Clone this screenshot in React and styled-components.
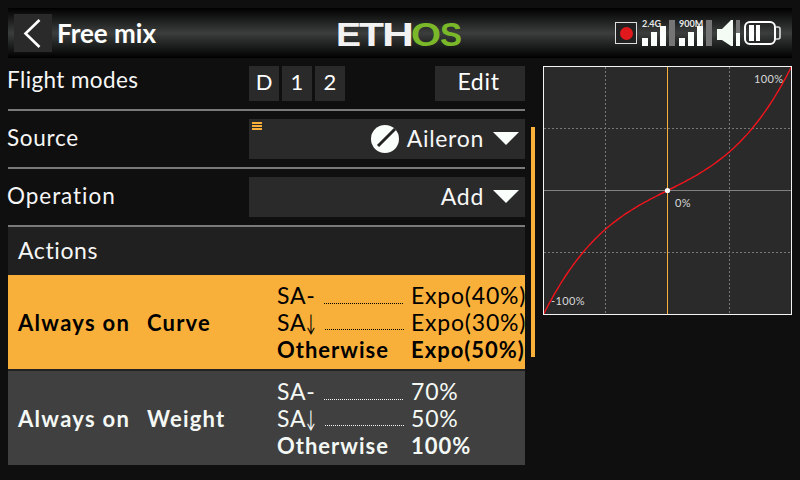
import styled, {createGlobalStyle} from 'styled-components'

const GlobalStyle = createGlobalStyle`
  html, body { margin: 0; padding: 0; background: #0f0f0f; }
  body { width: 800px; height: 480px; overflow: hidden; font-family: Lato, "Liberation Sans", sans-serif; color: #fff; }
`

const ORANGE = '#f9b03a'

const LOGO_LETTERS = [
  ['E', 1, 25, '#f2f2f2'],
  ['T', 24, 25, '#f2f2f2'],
  ['H', 47, 32, '#f2f2f2'],
  ['O', 76, 30, '#7ab82a'],
  ['S', 105, 22, '#7ab82a'],
]

const curvePoints = () => {
  const pts = []
  for (let i = -124; i <= 124; i += 2) {
    const x = i / 124
    const y = 0.5 * x * x * x + 0.5 * x
    pts.push(`${(123.5 + i).toFixed(1)},${(123.5 - y * 124).toFixed(1)}`)
  }
  return pts.join(' ')
}

const Signal = ({label}) => (
  <SignalIcon width="33" height="26" viewBox="0 0 33 26">
    <rect x="0" y="18" width="6" height="8" fill="#fbfffb"/>
    <rect x="9" y="12" width="6" height="14" fill="#fbfffb"/>
    <rect x="18" y="6" width="6" height="20" fill="#fbfffb"/>
    <rect x="27" y="0" width="6" height="26" fill="#757575"/>
    <text x="0" y="7" fontSize="9" fontWeight="700" fill="#e8e8e8" fontFamily="Lato, sans-serif">{label}</text>
  </SignalIcon>
)

const Rows = ({up, down, last}) => (
  <Details>
    <DetailLine>
      <DetailName>SA-</DetailName>
      <Dots $left={47}/>
      <DetailValue>{up}</DetailValue>
    </DetailLine>
    <DetailLine>
      <DetailName>SA<Arrow>↓</Arrow></DetailName>
      <Dots $left={48}/>
      <DetailValue>{down}</DetailValue>
    </DetailLine>
    <DetailLine $bold>
      <DetailName>Otherwise</DetailName>
      <DetailValue>{last}</DetailValue>
    </DetailLine>
  </Details>
)

export default function App() {
  return (
    <Page>
      <GlobalStyle/>
      <Header>
        <HeaderLeft>
          <BackButton>
            <svg width="38" height="38" viewBox="0 0 38 38">
              <path d="M25.5 6 L11.5 19.5 L25.5 33" fill="none" stroke="#fff" strokeWidth="2.6"/>
            </svg>
          </BackButton>
          <Title>Free mix</Title>
        </HeaderLeft>
        <Logo width="130" height="34" viewBox="0 0 130 34">
          {LOGO_LETTERS.map(([letter, x, width, color]) => (
            <text key={letter} x={x} y="30" fontFamily="Liberation Sans, sans-serif" fontWeight="700" fontSize="33" fill={color} textLength={width} lengthAdjust="spacingAndGlyphs">{letter}</text>
          ))}
        </Logo>
        <Status>
          <RecordBox><RecordDot/></RecordBox>
          <Signal label="2.4G"/>
          <Signal label="900M"/>
          <Speaker width="23" height="26" viewBox="0 0 23 26">
            <path d="M0 9 H5 L14 0 H16 V26 H14 L5 20 H0 Z" fill="#f4fbf4"/>
            <rect x="19" y="0" width="4" height="13" fill="#757575"/>
            <rect x="19" y="13" width="4" height="13" fill="#fbfffb"/>
          </Speaker>
          <svg width="37" height="24" viewBox="0 0 37 24">
            <rect x="1" y="1" width="30" height="22" rx="5" fill="none" stroke="#fff" strokeWidth="2"/>
            <path d="M32 6 H34 Q36 6 36 8 V16 Q36 18 34 18 H32" fill="none" stroke="#ddd" strokeWidth="1.6"/>
            <rect x="5" y="4" width="5" height="16" fill="#fff"/>
            <rect x="12" y="4" width="4" height="16" fill="#fff"/>
          </svg>
        </Status>
      </Header>
      <Main>
        <LeftColumn>
          <Row $height={51}>
            <Label $lift={8} $spacing={0.4}>Flight modes</Label>
            <Modes>
              <ModeButton>D</ModeButton>
              <ModeButton>1</ModeButton>
              <ModeButton>2</ModeButton>
            </Modes>
            <EditButton>Edit</EditButton>
          </Row>
          <Row>
            <Label>Source</Label>
            <Field>
              <Marker/>
              <svg width="28" height="28" viewBox="0 0 28 28">
                <circle cx="14" cy="14" r="14" fill="#fbfffb"/>
                <line x1="7" y1="21" x2="24" y2="4" stroke="#222" strokeWidth="3"/>
              </svg>
              <FieldText>Aileron</FieldText>
              <Caret/>
            </Field>
          </Row>
          <Row>
            <Label $spacing={0.95}>Operation</Label>
            <Field>
              <FieldText>Add</FieldText>
              <Caret/>
            </Field>
          </Row>
          <ActionsHead>Actions</ActionsHead>
          <ActionRow $active>
            <ActionName>Always on</ActionName>
            <ActionKind>Curve</ActionKind>
            <Rows up="Expo(40%)" down="Expo(30%)" last="Expo(50%)"/>
          </ActionRow>
          <ActionRow>
            <ActionName>Always on</ActionName>
            <ActionKind>Weight</ActionKind>
            <Rows up="70%" down="50%" last="100%"/>
          </ActionRow>
        </LeftColumn>
        <ScrollBar/>
        <Graph>
          <svg width="247" height="247" viewBox="0 0 247 247">
            <g stroke="#777" strokeWidth="1" strokeDasharray="2 2">
              <line x1="61.5" y1="0" x2="61.5" y2="247"/>
              <line x1="185.5" y1="0" x2="185.5" y2="247"/>
              <line x1="0" y1="61.5" x2="247" y2="61.5"/>
              <line x1="0" y1="185.5" x2="247" y2="185.5"/>
            </g>
            <line x1="0" y1="123.5" x2="247" y2="123.5" stroke="#808080"/>
            <line x1="123.5" y1="0" x2="123.5" y2="247" stroke={ORANGE}/>
            <polyline points={curvePoints()} fill="none" stroke="#f0141c" strokeWidth="1.4"/>
            <circle cx="123.5" cy="123.5" r="2.6" fill="#fff"/>
            <g fontFamily="Lato, sans-serif" fontSize="11" fill="#d8d8d8" letterSpacing="0.4">
              <text x="210" y="16">100%</text>
              <text x="131" y="140">0%</text>
              <text x="7" y="238">-100%</text>
            </g>
          </svg>
        </Graph>
      </Main>
    </Page>
  )
}

const Page = styled.div`
  width: 800px;
  height: 480px;
  padding: 8px;
  box-sizing: border-box;
`

const Header = styled.header`
  height: 50px;
  display: grid;
  grid-template-columns: 1fr auto 1fr;
  align-items: center;
  background: linear-gradient(#000 0%, #1a1c1b 22%, #3b3e3d 50%, #1a1c1b 78%, #000 100%);
`

const HeaderLeft = styled.div`
  display: flex;
  align-items: center;
  padding-left: 6px;
`

const BackButton = styled.div`
  width: 38px;
  height: 38px;
  display: flex;
  background: #2a2a2a;
`

const Title = styled.div`
  margin-left: 5px;
  font-size: 26px;
  font-weight: 700;
  color: #fff;
`

const Logo = styled.svg`
  overflow: visible;
`

const Status = styled.div`
  display: flex;
  align-items: center;
  justify-content: flex-end;
  gap: 4px;
  padding-right: 11px;
`

const SignalIcon = styled.svg`
  overflow: visible;
`

const Speaker = styled.svg`
  margin-left: 1px;
`

const RecordBox = styled.div`
  width: 22px;
  height: 22px;
  box-sizing: border-box;
  border: 1px solid #ddd;
  display: flex;
  align-items: center;
  justify-content: center;
  background: #222;
  margin-right: 1px;
`

const RecordDot = styled.div`
  width: 13px;
  height: 13px;
  border-radius: 50%;
  background: #e2191c;
`

const Main = styled.main`
  display: flex;
  align-items: flex-start;
`

const LeftColumn = styled.div`
  width: 517px;
  flex: none;
`

const Row = styled.div`
  height: ${p => p.$height || 56}px;
  border-bottom: 2px solid #7a7a7a;
  display: flex;
  align-items: center;
`

const Label = styled.div`
  width: 241px;
  flex: none;
  font-size: 22.5px;
  letter-spacing: ${p => p.$spacing || 0.7}px;
  color: #f6f6f6;
  margin-left: -1px;
  margin-right: 1px;
  padding-bottom: ${p => p.$lift || 4}px;
`

const Modes = styled.div`
  display: flex;
  gap: 3px;
  flex: 1;
`

const ModeButton = styled.div`
  width: 30px;
  height: 35px;
  background: #2a2a2a;
  font-size: 22px;
  line-height: 31px;
  text-align: center;
`

const EditButton = styled.div`
  width: 90px;
  height: 35px;
  background: #2a2a2a;
  font-size: 23px;
  line-height: 31px;
  text-align: center;
  letter-spacing: 0.7px;
  padding-right: 3px;
  box-sizing: border-box;
`

const Field = styled.div`
  position: relative;
  flex: 1;
  height: 40px;
  background: #2a2a2a;
  display: flex;
  align-items: center;
  justify-content: flex-end;
  gap: 8px;
  padding-right: 6px;
`

const Marker = styled.div`
  position: absolute;
  top: 3px;
  left: 3px;
  width: 10px;
  height: 8px;
  background: repeating-linear-gradient(${ORANGE} 0 2px, transparent 2px 3px);
`

const FieldText = styled.span`
  font-size: 23px;
  letter-spacing: 0.7px;
  color: #f6f6f6;
  padding-bottom: 3px;
`

const Caret = styled.div`
  width: 0;
  height: 0;
  margin-left: 1px;
  margin-bottom: 1px;
  border-left: 13px solid transparent;
  border-right: 13px solid transparent;
  border-top: 13px solid #fbfffb;
`

const ActionsHead = styled.div`
  height: 48px;
  line-height: 46px;
  padding-left: 10px;
  background: #202020;
  font-size: 23px;
  letter-spacing: 0.6px;
  color: #f6f6f6;
`

const ActionRow = styled.div`
  height: 94px;
  display: flex;
  align-items: center;
  padding-left: 10px;
  background: ${p => (p.$active ? ORANGE : '#404040')};
  color: ${p => (p.$active ? '#000' : '#f4f8f4')};
  & + & {
    margin-top: 2px;
    box-shadow: 0 -2px 0 #222;
  }
`

const ActionName = styled.div`
  width: 129px;
  flex: none;
  font-size: 22px;
  font-weight: 700;
  letter-spacing: 1.3px;
`

const ActionKind = styled.div`
  width: 130px;
  flex: none;
  font-size: 22px;
  font-weight: 700;
  letter-spacing: 1.2px;
`

const Details = styled.div`
  flex: 1;
  min-width: 0;
  padding-top: 2px;
`

const DetailLine = styled.div`
  height: 26.5px;
  line-height: 26.5px;
  display: flex;
  position: relative;
  white-space: nowrap;
  font-size: ${p => (p.$bold ? 22 : 23)}px;
  font-weight: ${p => (p.$bold ? 700 : 400)};
  letter-spacing: ${p => (p.$bold ? 1 : 0.8)}px;
  margin-top: ${p => (p.$bold ? 2 : 0)}px;
`

const DetailName = styled.span`
  width: 134px;
  flex: none;
`

const Arrow = styled.span`
  display: inline-block;
  transform: scaleX(0.55);
  transform-origin: left center;
`

const Dots = styled.span`
  position: absolute;
  left: ${p => p.$left}px;
  width: 79px;
  bottom: 5px;
  border-bottom: 1px dotted currentColor;
`

const DetailValue = styled.span``

const ScrollBar = styled.div`
  width: 4px;
  height: 230px;
  margin: 69px 8px 0 6px;
  flex: none;
  background: ${ORANGE};
`

const Graph = styled.div`
  width: 249px;
  height: 249px;
  margin-top: 8px;
  box-sizing: border-box;
  border: 1px solid #f4f4f4;
  background: #2a2a2a;
  flex: none;
  display: flex;
`
